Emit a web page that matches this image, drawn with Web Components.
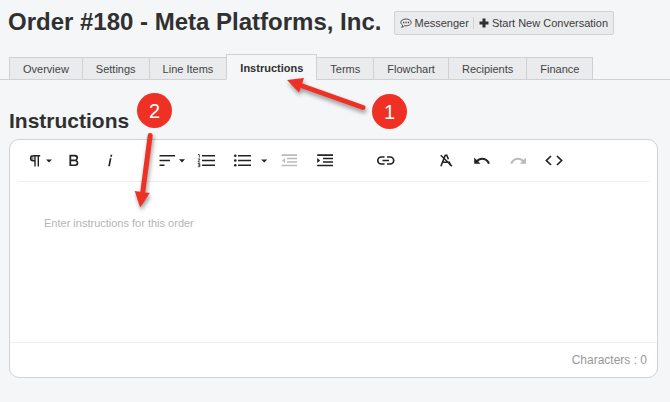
<!DOCTYPE html>
<html lang="en">
<head>
<meta charset="utf-8">
<meta name="viewport" content="width=device-width, initial-scale=1">
<title>Order #180 - Meta Platforms, Inc.</title>
<style>
body { margin: 0; background: #f4f6f8; color: #303030; font-family: "Liberation Sans", Arial, sans-serif; }
</style>
</head>
<body>
<order-page></order-page>
<script>
const define = (name, html, setup) => customElements.define(name, class extends HTMLElement {
  constructor() {
    super();
    this.attachShadow({ mode: 'open' });
  }
  connectedCallback() {
    if (this.shadowRoot.childNodes.length) return;
    const t = document.createElement('template');
    t.innerHTML = html;
    this.shadowRoot.append(t.content.cloneNode(true));
    if (setup) setup(this, this.shadowRoot);
  }
});

define('action-button', `
<style>
:host { display: flex; }
button { display: flex; align-items: center; gap: 2px; border: 0; padding: 0; background: none; color: #3c3c3c; font: 11px/16px "Liberation Sans", Arial, sans-serif; white-space: nowrap; cursor: pointer; }
::slotted(svg) { width: 12px; height: 12px; }
</style>
<button type="button"><slot name="icon"></slot><slot></slot></button>`);

define('order-header', `
<style>
:host { display: flex; align-items: center; gap: 13px; padding: 8px 8px 0; }
h1 { margin: 0; font-size: 24px; line-height: 28px; white-space: nowrap; }
.actions { display: flex; align-items: center; margin-top: 2px; padding: 3px 5px; border: 1px solid #cfd1d3; border-radius: 2px; background: #e9ebed; gap: 4px; }
.actions i { width: 1px; height: 12px; background: #cfd1d3; }
</style>
<h1><slot></slot></h1>
<div class="actions">
  <action-button><svg slot="icon" viewBox="0 0 12 12" fill="none" stroke="#404040"><path d="M6 2C3 2 .8 3.400 .8 5.400c0 1.300.8 2.100 1.900 2.700C2.700 9 2.200 9.800 1.500 10.300 3 10.200 4 9.600 4.700 8.700c4 .5 6.500-1.200 6.500-3.300C11.200 3.400 9 2 6 2Z" stroke-width=".9"/><path d="M3 5.500h1.300m1.100 0h1.300m1.100 0h1.300" stroke-width="1.300"/></svg>Messenger</action-button>
  <i></i>
  <action-button><svg slot="icon" viewBox="0 0 12 12"><path d="M4.500 1.500h3v3h3v3h-3v3h-3v-3h-3v-3h3Z" fill="#303030"/></svg>Start New Conversation</action-button>
</div>`);

define('tab-link', `
<style>
:host { display: block; margin-left: -1px; }
a { display: block; box-sizing: border-box; height: 23px; padding: 4px 13px; border: 1px solid #cfd1d3; background: #e9ebed; color: #444; font-size: 11px; line-height: 14px; text-decoration: none; white-space: nowrap; }
:host([active]) a { height: 26px; border-bottom-color: #f4f6f8; background: #f4f6f8; color: #303030; font-weight: bold; padding-top: 6px; }
</style>
<a href="#"><slot></slot></a>`, (host, root) => {
  if (host.hasAttribute('active')) root.querySelector('a').setAttribute('aria-current', 'page');
});

define('tab-bar', `
<style>
:host { display: block; margin-top: 18px; padding-left: 10px; box-shadow: inset 0 -1px #cfd1d3; }
nav { display: flex; align-items: flex-end; }
</style>
<nav aria-label="Order sections"><slot></slot></nav>`);

const icons = {
  paragraph: '<path d="M13 4.700h7.200M15 4.700v10.800M18.300 4.700v10.800M15 9.800h-1.900a2.500 2.500 0 0 1 0-5.100" fill="none" stroke="currentColor" stroke-width="1.400"/><path d="M13.500 5v4.800h-.6a2.400 2.400 0 0 1 0-4.800Z" opacity=".5"/><path d="M26 8.500h6L29 11.500Z"/>',
  bold: '<path transform="translate(8.500 -.2) scale(.8)" d="M15.250 11.800A3.680 3.680 0 0 0 17 9a3.930 3.930 0 0 0-3.860-4H6.150V19h7.500a3.740 3.740 0 0 0 3.700-3.780A3.640 3.640 0 0 0 15.250 11.800ZM8.350 7h4.500a2 2 0 0 1 0 4H8.350Zm4.900 10H8.350V13h4.900a2 2 0 0 1 0 4Z"/>',
  italic: '<path d="M18.600 3.800h1.700l-.4 1.900h-1.700ZM17.800 7.300h1.700l-1.600 8h-1.700Z"/>',
  align: '<path d="M7.500 4H23v1.600H7.500ZM7.500 8.700H18v1.600H7.500ZM7.500 13.400H12.500V15H7.500ZM27 8.300h6L30 11.500Z"/>',
  ordered: '<path d="M14 4h13v1.600H14ZM14 8.700h13v1.600H14ZM14 13.400h13V15H14Z"/><path d="M10 3.500h1.300V6.500M9.800 8h2.200L10 10.900h2.200M9.800 12.500h2v1.500h-1.300 1.300v1.700h-2" fill="none" stroke="currentColor" stroke-width=".8"/>',
  bullets: '<path d="M14 4h13v1.600H14ZM14 8.700h13v1.600H14ZM14 13.400h13V15H14Z"/><circle cx="11.300" cy="4.800" r="1.300"/><circle cx="11.300" cy="9.500" r="1.300"/><circle cx="11.300" cy="14.200" r="1.300"/>',
  caret: '<path d="M1.200 8.500h6L4.200 11.500Z"/>',
  outdent: '<path d="M9.700 3.300H25v1.600H9.700ZM15 6.700h10v1.500H15ZM15 10.200h10v1.500H15ZM9.700 13.700H25v1.600H9.700ZM13 7v5L10 9.500Z"/>',
  indent: '<path d="M9.200 3.300H25v1.600H9.200ZM15 6.700h10v1.500H15ZM15 10.200h10v1.500H15ZM9.200 13.700H25v1.600H9.200ZM9.200 7v5l3-2.500Z"/>',
  link: '<path d="M16.500 6H13.300a3.500 3.500 0 0 0 0 7h3.200M19 6h3.200a3.500 3.500 0 0 1 0 7H19M14.500 9.500h6.500" fill="none" stroke="currentColor" stroke-width="1.700"/>',
  clear: '<path d="M12.900 15.300l4.400-11h1.500l1.600 4M21 10.500l1.600 4M14.800 11.200h5.500" fill="none" stroke="currentColor" stroke-width="1.600"/><path d="M12.800 4.200L24 15.200" stroke="currentColor" stroke-width="1.500"/>',
  undo: '<path d="M10.200 6.500v6.300h6.300L14.200 10.500a6 6 0 0 1 9.800 2.400l1.900-.6A8 8 0 0 0 12.700 9Z"/>',
  redo: '<path d="M26 6.500v6.300h-6.300L22 10.500a6 6 0 0 0-9.800 2.400l-1.900-.6A8 8 0 0 1 23.500 9Z"/>',
  code: '<path d="M15 5l-4.600 4.500L15 14M21 5l4.600 4.500L21 14" fill="none" stroke="currentColor" stroke-width="1.700"/>'
};

define('tool-button', `
<style>
:host { display: block; color: #222; }
:host([disabled]) { color: #bababa; }
button { display: block; width: 36px; height: 20px; padding: 0; border: 0; background: none; color: inherit; cursor: pointer; }
:host([icon="caret"]) button { width: 12px; }
svg { display: block; width: 100%; height: 20px; fill: currentColor; }
</style>
<button type="button"></button>`, (host, root) => {
  const icon = host.getAttribute('icon');
  const b = root.querySelector('button');
  b.setAttribute('aria-label', host.getAttribute('label'));
  b.disabled = host.hasAttribute('disabled');
  b.innerHTML = `<svg viewBox="0 0 ${icon === 'caret' ? 12 : 36} 20" aria-hidden="true">${icons[icon]}</svg>`;
});

define('text-editor', `
<style>
:host { display: block; margin: 4px 12px 0 9px; border: 1px solid #cfd1d3; border-radius: 10px; background: #fff; overflow: hidden; }
.tools { display: flex; gap: 24px; margin: 0 8px; padding: 11px 2px 10px; border-bottom: 1px solid #efefef; }
.tools div { display: flex; }
textarea { display: block; box-sizing: border-box; width: 100%; height: 160px; padding: 33px 34px; border: 0; outline: 0; resize: none; background: none; color: #303030; font: 11px/16px "Liberation Sans", Arial, sans-serif; }
textarea::placeholder { color: #b4b4b4; opacity: 1; }
footer { padding: 8px 10px; border-top: 1px solid #efefef; color: #999; font-size: 12px; line-height: 18px; text-align: right; }
</style>
<div class="tools" role="toolbar" aria-label="Formatting">
  <div><tool-button icon="paragraph" label="Paragraph format"></tool-button><tool-button icon="bold" label="Bold"></tool-button><tool-button icon="italic" label="Italic"></tool-button></div>
  <div><tool-button icon="align" label="Align"></tool-button><tool-button icon="ordered" label="Ordered list"></tool-button><tool-button icon="bullets" label="Unordered list"></tool-button><tool-button icon="caret" label="List style"></tool-button><tool-button icon="outdent" label="Decrease indent" disabled></tool-button><tool-button icon="indent" label="Increase indent"></tool-button></div>
  <div><tool-button icon="link" label="Insert link"></tool-button></div>
  <div><tool-button icon="clear" label="Clear formatting"></tool-button><tool-button icon="undo" label="Undo"></tool-button><tool-button icon="redo" label="Redo" disabled></tool-button><tool-button icon="code" label="Code view"></tool-button></div>
</div>
<textarea aria-label="Instructions" placeholder="Enter instructions for this order"></textarea>
<footer>Characters : 0</footer>`);

define('step-badge', `
<style>
:host { position: absolute; display: flex; align-items: center; justify-content: center; width: 35px; height: 35px; border-radius: 50%; background: #ee3124; color: #fff; font-size: 20px; line-height: 24px; }
</style>
<slot></slot>`);

define('step-arrows', `
<style>
:host { position: absolute; left: 0; top: 0; pointer-events: none; }
svg { display: block; width: 400px; height: 220px; filter: drop-shadow(1px 3px 2px rgba(0,0,0,.4)); }
</style>
<svg viewBox="0 0 400 220" fill="#ee3124" stroke="#ee3124" aria-hidden="true">
  <path d="M363 107.500L301 85.500M150.200 135.500L142.500 194" stroke-width="5" stroke-linecap="round"/>
  <path d="M287 80l17-2-5 14.500ZM140.200 207.500l-5.500-16.500 15 2Z" stroke="none"/>
</svg>`);

define('order-page', `
<style>
:host { display: block; position: relative; min-height: 100vh; box-sizing: border-box; padding-bottom: 24px; }
h2 { margin: 26px 0 0 9px; font-size: 21px; line-height: 29px; }
step-badge.one { left: 372px; top: 94px; }
step-badge.two { left: 137px; top: 93px; }
</style>
<order-header>Order #180 - Meta Platforms, Inc.</order-header>
<tab-bar>
  <tab-link>Overview</tab-link><tab-link>Settings</tab-link><tab-link>Line Items</tab-link><tab-link active>Instructions</tab-link><tab-link>Terms</tab-link><tab-link>Flowchart</tab-link><tab-link>Recipients</tab-link><tab-link>Finance</tab-link>
</tab-bar>
<main>
  <h2>Instructions</h2>
  <text-editor></text-editor>
</main>
<step-arrows></step-arrows>
<step-badge class="one">1</step-badge>
<step-badge class="two">2</step-badge>`);
</script>
</body>
</html>
